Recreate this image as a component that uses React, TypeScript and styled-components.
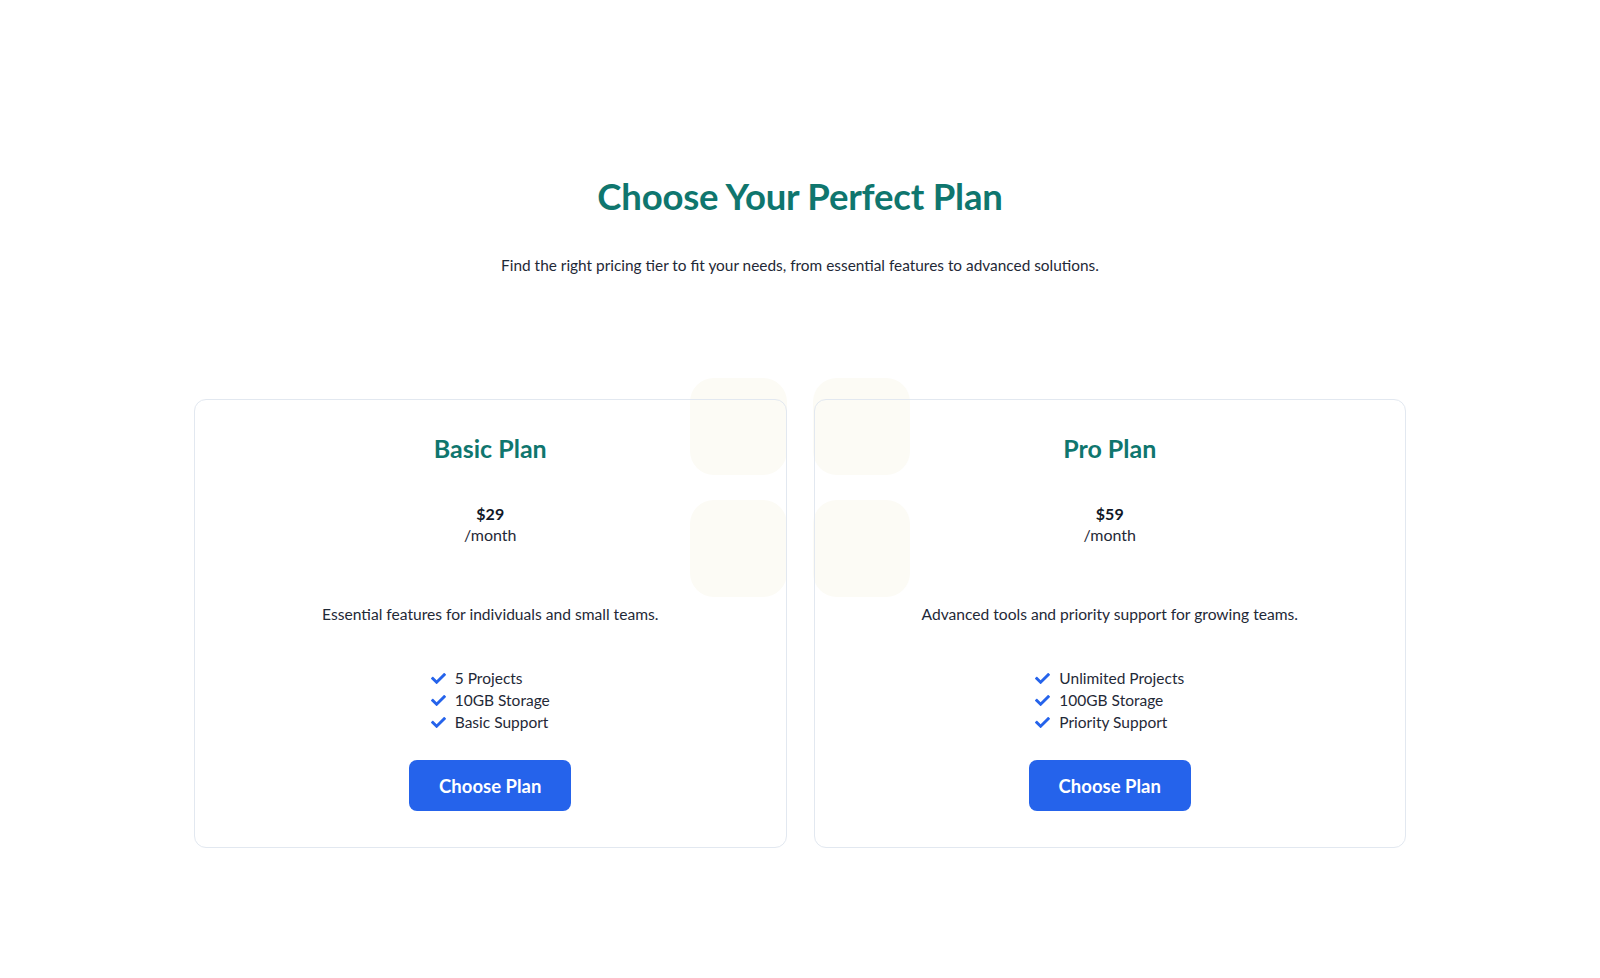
import styled, { createGlobalStyle } from 'styled-components';
import { FaCheck } from 'react-icons/fa';

const GlobalStyle = createGlobalStyle`
  body {
    margin: 0;
    background: #ffffff;
    font-family: 'Lato', 'Noto Sans', sans-serif;
    color: #1f2937;
  }
`;

const Page = styled.main`
  min-height: 978px;
  display: flex;
  flex-direction: column;
  align-items: center;
  padding-top: 174px;
  box-sizing: border-box;
`;
const Heading = styled.h1`
  margin: 0;
  font-size: 36.5px;
  line-height: 44px;
  font-weight: 700;
  color: #0f766e;
  letter-spacing: -0.2px;
`;
const Subtitle = styled.p`
  margin: 35px 0 0;
  font-size: 15.4px;
  line-height: 24px;
  color: #1f2937;
`;

const CardsArea = styled.div`
  position: relative;
  margin-top: 122px;
  width: 1212px;
  display: grid;
  grid-template-columns: 1fr 1fr;
  gap: 27px;
`;
const Decor = styled.div`
  position: absolute;
  top: -21px;
  left: 50%;
  transform: translateX(-50%);
  display: grid;
  grid-template-columns: 97px 97px;
  grid-auto-rows: 97px;
  gap: 25px 26px;
  z-index: 0;
`;
const Tile = styled.div`
  background: #fcfbf5;
  border-radius: 24px;
`;

const Card = styled.div`
  position: relative;
  z-index: 1;
  border: 1px solid #e2e8f0;
  border-radius: 12px;
  padding: 31px 24px 36px;
  display: flex;
  flex-direction: column;
  align-items: center;
`;
const PlanName = styled.h2`
  margin: 0;
  font-size: 25px;
  line-height: 34px;
  font-weight: 700;
  color: #0f766e;
`;
const Price = styled.div`
  margin-top: 38px;
  display: flex;
  flex-direction: column;
  align-items: center;
  font-size: 16px;
  line-height: 21px;
`;
const Amount = styled.span`
  font-weight: 700;
  color: #111827;
`;
const Period = styled.span`
  color: #1f2937;
`;
const Description = styled.p`
  margin: 58px 0 0;
  font-size: 15.6px;
  line-height: 22px;
  color: #1f2937;
`;
const Features = styled.ul`
  list-style: none;
  margin: 42px 0 0;
  padding: 0;
  display: flex;
  flex-direction: column;
`;
const Feature = styled.li`
  display: flex;
  align-items: center;
  gap: 9px;
  font-size: 15.5px;
  line-height: 22px;
  color: #1f2937;
  svg {
    color: #2563eb;
    flex-shrink: 0;
  }
`;
const Button = styled.button`
  margin-top: 27px;
  width: 162px;
  height: 51px;
  border: none;
  border-radius: 8px;
  background: #2563eb;
  color: #ffffff;
  font-family: inherit;
  font-size: 18.5px;
  font-weight: 700;
  cursor: pointer;
`;

const plans = [
  {
    name: 'Basic Plan',
    price: '$29',
    description: 'Essential features for individuals and small teams.',
    features: ['5 Projects', '10GB Storage', 'Basic Support'],
  },
  {
    name: 'Pro Plan',
    price: '$59',
    description: 'Advanced tools and priority support for growing teams.',
    features: ['Unlimited Projects', '100GB Storage', 'Priority Support'],
  },
];

export default function App() {
  return (
    <>
      <GlobalStyle />
      <Page>
        <Heading>Choose Your Perfect Plan</Heading>
        <Subtitle>
          Find the right pricing tier to fit your needs, from essential features to advanced
          solutions.
        </Subtitle>
        <CardsArea>
          <Decor>
            <Tile />
            <Tile />
            <Tile />
            <Tile />
          </Decor>
          {plans.map((plan) => (
            <Card key={plan.name}>
              <PlanName>{plan.name}</PlanName>
              <Price>
                <Amount>{plan.price}</Amount>
                <Period>/month</Period>
              </Price>
              <Description>{plan.description}</Description>
              <Features>
                {plan.features.map((f) => (
                  <Feature key={f}>
                    <FaCheck size={15} />
                    {f}
                  </Feature>
                ))}
              </Features>
              <Button>Choose Plan</Button>
            </Card>
          ))}
        </CardsArea>
      </Page>
    </>
  );
}
